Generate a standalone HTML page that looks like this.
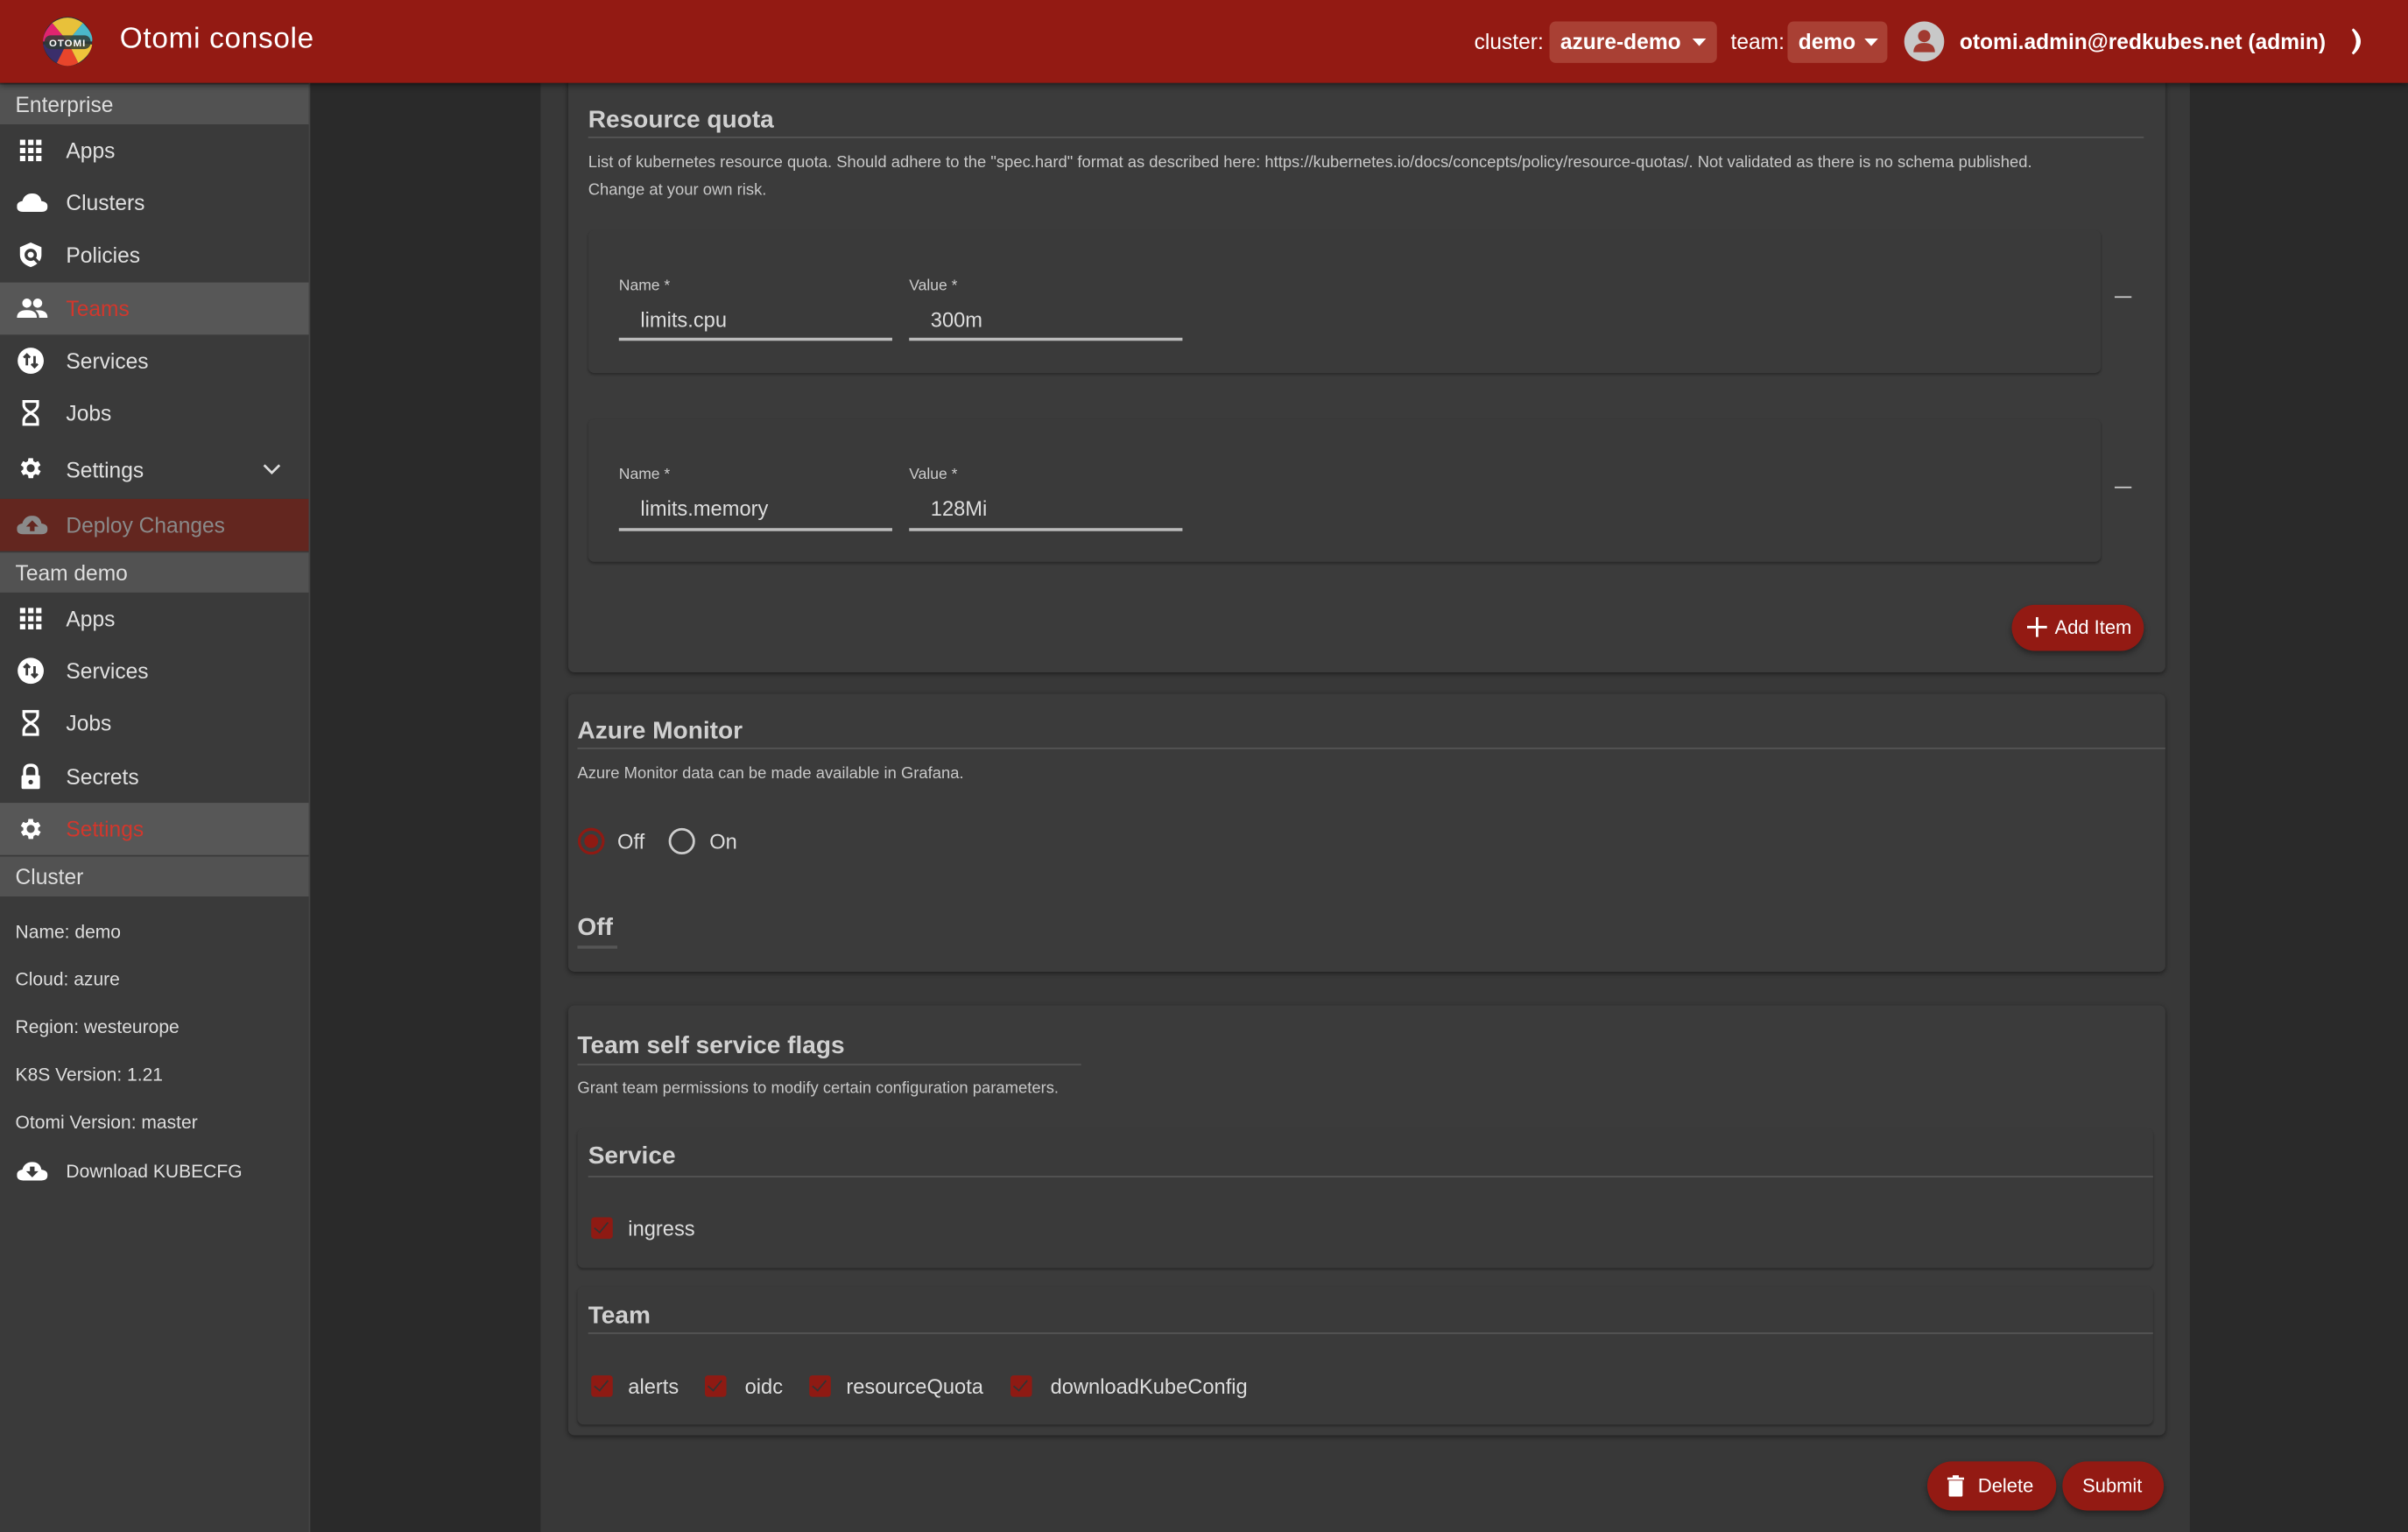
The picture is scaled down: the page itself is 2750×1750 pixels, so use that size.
<!DOCTYPE html>
<html><head><meta charset="utf-8">
<style>
html,body{margin:0;padding:0;width:2750px;height:1750px;overflow:hidden;background:#2a2a2a;}
#root{position:absolute;left:0;top:0;width:1568px;height:998px;transform:scale(1.7538,1.7535);transform-origin:0 0;font-family:"Liberation Sans",sans-serif;background:#2a2a2a;overflow:hidden;}
.a{position:absolute;}
.hdr{left:0;top:0;width:1568px;height:54px;background:#931a13;box-shadow:0 2px 4px rgba(0,0,0,.5);z-index:5;}
.side{left:0;top:54px;width:201px;height:944px;background:#3a3a3a;border-right:1px solid #444;}
.sh{position:absolute;left:0;width:201px;height:26px;background:#525252;color:#ddd;font-size:14px;line-height:26px;text-indent:10px;}
.it{position:absolute;left:0;width:201px;height:34px;color:#e0e0e0;font-size:14px;line-height:34px;}
.it span{position:absolute;left:43px;}
.it svg{position:absolute;left:11px;top:8px;}
.info{position:absolute;left:10px;color:#ddd;font-size:12px;}
.panel{left:352px;top:54px;width:1074px;height:944px;background:#383838;}
.card{position:absolute;background:#3b3b3b;border-radius:4px;box-shadow:0 1px 3px rgba(0,0,0,.45);}
.card.in{box-shadow:0 1px 1.5px rgba(0,0,0,.3);background:#3a3a3a;}
.ttl{position:absolute;color:#d0d0d0;font-size:16px;font-weight:bold;}
.ln{position:absolute;height:1px;background:#555;}
.desc{position:absolute;color:#c8c8c8;font-size:10.5px;line-height:18px;white-space:nowrap;}
.lab{position:absolute;color:#ccc;font-size:10px;}
.inp{position:absolute;color:#ddd;font-size:13.5px;}
.ul{position:absolute;height:1.5px;background:#bbb;}
.btn{position:absolute;background:#931a13;color:#fff;border-radius:16px;font-size:12.5px;box-shadow:0 2px 4px rgba(0,0,0,.4);}
.cb{position:absolute;width:14px;height:14px;background:#8e1a13;border-radius:2px;}
.cb:after{content:"";position:absolute;left:4px;top:1px;width:4px;height:8px;border:solid #333;border-width:0 1.5px 1.5px 0;transform:rotate(40deg);}
.cl{position:absolute;color:#ddd;font-size:13.5px;}
</style></head><body>
<div id="root">
<div class="a hdr">
  <svg class="a" style="left:27px;top:10px" width="34" height="34" viewBox="0 0 34 34">
    <circle cx="17" cy="17" r="16" fill="#2a2f3a"/>
    <path d="M7 5 Q17 -2 27 5 L17 17Z" fill="#e8c13a"/>
    <path d="M27 5 Q34 12 33 17 L17 17Z" fill="#4bb8c9"/>
    <path d="M7 5 Q1 11 1 17 L17 17Z" fill="#e0246f"/>
    <path d="M10 31 Q17 35 24 31 L17 17Z" fill="#e8452b"/>
    <path d="M24 31 Q32 26 33 19 L17 17Z" fill="#f0c53a"/>
    <path d="M1 19 Q3 27 10 31 L17 17Z" fill="#3b2e6b"/>
    <rect x="2" y="13" width="30" height="9" rx="4" fill="#2f3b36" opacity=".85"/>
    <text x="17" y="20.3" text-anchor="middle" fill="#fff" font-size="6.5" font-weight="bold" font-family="Liberation Sans" letter-spacing=".6">OTOMI</text>
  </svg>
  <div class="a" style="left:78px;top:15px;color:#fff;font-size:19px;letter-spacing:.4px">Otomi console</div>
  <div class="a" style="left:960px;top:19px;color:#fff;font-size:14px">cluster:</div>
  <div class="a" style="left:1009px;top:14px;width:109px;height:27px;background:#a94034;border-radius:4px"></div>
  <div class="a" style="left:1016px;top:19px;color:#fff;font-size:14px;font-weight:bold">azure-demo</div>
  <svg class="a" style="left:1102px;top:25px" width="10" height="6"><path d="M0 0H9L4.5 5Z" fill="#fff"/></svg>
  <div class="a" style="left:1127px;top:19px;color:#fff;font-size:14px">team:</div>
  <div class="a" style="left:1164px;top:14px;width:65px;height:27px;background:#a94034;border-radius:4px"></div>
  <div class="a" style="left:1171px;top:19px;color:#fff;font-size:14px;font-weight:bold">demo</div>
  <svg class="a" style="left:1214px;top:25px" width="10" height="6"><path d="M0 0H9L4.5 5Z" fill="#fff"/></svg>
  <svg class="a" style="left:1239px;top:13px" width="28" height="28" viewBox="0 0 28 28"><circle cx="14" cy="14" r="13" fill="#c8c8c8"/><circle cx="14" cy="10.5" r="4" fill="#a13a30"/><path d="M7 21 Q7 15 14 15 Q21 15 21 21Z" fill="#a13a30"/></svg>
  <div class="a" style="left:1276px;top:19px;color:#fff;font-size:14px;font-weight:bold">otomi.admin@redkubes.net (admin)</div>
  <svg class="a" style="left:1528px;top:18px" width="14" height="18" viewBox="0 0 14 18"><path d="M4 1 Q13 9 4 17 Q10 9 4 1Z" fill="#fff" stroke="#fff" stroke-width="1.5"/></svg>
</div>

<div class="a side">
  <div class="sh" style="top:1px">Enterprise</div>
  <div class="it" style="top:27px"><svg width="18" height="18" viewBox="0 0 18 18" fill="#fff"><rect x="2" y="2" width="3.5" height="3.5"/><rect x="7.3" y="2" width="3.5" height="3.5"/><rect x="12.5" y="2" width="3.5" height="3.5"/><rect x="2" y="7.3" width="3.5" height="3.5"/><rect x="7.3" y="7.3" width="3.5" height="3.5"/><rect x="12.5" y="7.3" width="3.5" height="3.5"/><rect x="2" y="12.5" width="3.5" height="3.5"/><rect x="7.3" y="12.5" width="3.5" height="3.5"/><rect x="12.5" y="12.5" width="3.5" height="3.5"/></svg><span>Apps</span></div>
  <div class="it" style="top:61px"><svg width="20" height="18" viewBox="0 0 20 18" fill="#fff"><path d="M4 15 Q0 15 0 11.5 Q0 8.5 3.5 8 Q5 3 10 3 Q15 3 16 8 Q20 8.5 20 11.5 Q20 15 16 15Z"/></svg><span>Clusters</span></div>
  <div class="it" style="top:95px"><svg width="18" height="18" viewBox="0 0 18 18"><path d="M9 1 L16 4 V9 Q16 14.5 9 17 Q2 14.5 2 9 V4Z" fill="#fff"/><circle cx="9" cy="9" r="3" fill="none" stroke="#3a3a3a" stroke-width="2"/><path d="M11 11 L14 14" stroke="#3a3a3a" stroke-width="2"/></svg><span>Policies</span></div>
  <div class="it" style="top:130px;background:#575757"><svg width="20" height="18" viewBox="0 0 20 18" fill="#fff"><circle cx="6.5" cy="5.5" r="3"/><circle cx="13.5" cy="5.5" r="3"/><path d="M0 15 Q0 10 6.5 10 Q13 10 13 15Z"/><path d="M12 10.2 Q20 9.5 20 15 H14.5 Q14.5 12 12 10.2Z"/></svg><span style="color:#d2372c">Teams</span></div>
  <div class="it" style="top:164px"><svg width="18" height="18" viewBox="0 0 18 18"><circle cx="9" cy="9" r="8.5" fill="#fff"/><path d="M6.5 12 V5 M4.5 7 L6.5 5 L8.5 7 M11.5 6 V13 M9.5 11 L11.5 13 L13.5 11" stroke="#3a3a3a" stroke-width="1.6" fill="none"/></svg><span>Services</span></div>
  <div class="it" style="top:198px"><svg width="18" height="18" viewBox="0 0 18 18" fill="none" stroke="#fff" stroke-width="1.8"><path d="M4.5 1.5 H13.5 V4 Q13.5 6.5 9 9 Q4.5 11.5 4.5 14 V16.5 H13.5 V14 Q13.5 11.5 9 9 Q4.5 6.5 4.5 4Z"/></svg><span>Jobs</span></div>
  <div class="it" style="top:234px;height:37px"><svg width="18" height="18" viewBox="0 0 24 24" fill="#fff"><path d="M19.4 13a7.5 7.5 0 0 0 0-2l2.1-1.6-2-3.5-2.5 1a7.4 7.4 0 0 0-1.7-1L15 3.3h-4l-.4 2.6a7.4 7.4 0 0 0-1.7 1l-2.5-1-2 3.5L6.6 11a7.5 7.5 0 0 0 0 2l-2.1 1.6 2 3.5 2.5-1a7.4 7.4 0 0 0 1.7 1l.4 2.6h4l.4-2.6a7.4 7.4 0 0 0 1.7-1l2.5 1 2-3.5zM13 15.5a3.5 3.5 0 1 1 0-7 3.5 3.5 0 0 1 0 7z" transform="translate(-1 0)"/></svg><span style="line-height:37px">Settings</span><svg style="left:171px;top:14px" width="12" height="8" viewBox="0 0 12 8"><path d="M1 1 L6 6 L11 1" stroke="#ddd" stroke-width="1.6" fill="none"/></svg></div>
  <div class="it" style="top:271px;background:#63261f;color:#8a8a8a"><svg width="20" height="18" viewBox="0 0 20 18"><path d="M4 15 Q0 15 0 11.5 Q0 8.5 3.5 8 Q5 3 10 3 Q15 3 16 8 Q20 8.5 20 11.5 Q20 15 16 15Z" fill="#8a8a8a"/><path d="M10 6 L14 10 H11.5 V13 H8.5 V10 H6Z" fill="#63261f"/></svg><span>Deploy Changes</span></div>
  <div class="sh" style="top:306px">Team demo</div>
  <div class="it" style="top:332px"><svg width="18" height="18" viewBox="0 0 18 18" fill="#fff"><rect x="2" y="2" width="3.5" height="3.5"/><rect x="7.3" y="2" width="3.5" height="3.5"/><rect x="12.5" y="2" width="3.5" height="3.5"/><rect x="2" y="7.3" width="3.5" height="3.5"/><rect x="7.3" y="7.3" width="3.5" height="3.5"/><rect x="12.5" y="7.3" width="3.5" height="3.5"/><rect x="2" y="12.5" width="3.5" height="3.5"/><rect x="7.3" y="12.5" width="3.5" height="3.5"/><rect x="12.5" y="12.5" width="3.5" height="3.5"/></svg><span>Apps</span></div>
  <div class="it" style="top:366px"><svg width="18" height="18" viewBox="0 0 18 18"><circle cx="9" cy="9" r="8.5" fill="#fff"/><path d="M6.5 12 V5 M4.5 7 L6.5 5 L8.5 7 M11.5 6 V13 M9.5 11 L11.5 13 L13.5 11" stroke="#3a3a3a" stroke-width="1.6" fill="none"/></svg><span>Services</span></div>
  <div class="it" style="top:400px"><svg width="18" height="18" viewBox="0 0 18 18" fill="none" stroke="#fff" stroke-width="1.8"><path d="M4.5 1.5 H13.5 V4 Q13.5 6.5 9 9 Q4.5 11.5 4.5 14 V16.5 H13.5 V14 Q13.5 11.5 9 9 Q4.5 6.5 4.5 4Z"/></svg><span>Jobs</span></div>
  <div class="it" style="top:435px"><svg width="18" height="18" viewBox="0 0 18 18"><path d="M5 8 V5.5 Q5 1.5 9 1.5 Q13 1.5 13 5.5 V8" stroke="#fff" stroke-width="2" fill="none"/><rect x="3" y="8" width="12" height="9" rx="1" fill="#fff"/><circle cx="9" cy="12.5" r="1.5" fill="#3a3a3a"/></svg><span>Secrets</span></div>
  <div class="it" style="top:469px;background:#575757"><svg width="18" height="18" viewBox="0 0 24 24" fill="#fff"><path d="M19.4 13a7.5 7.5 0 0 0 0-2l2.1-1.6-2-3.5-2.5 1a7.4 7.4 0 0 0-1.7-1L15 3.3h-4l-.4 2.6a7.4 7.4 0 0 0-1.7 1l-2.5-1-2 3.5L6.6 11a7.5 7.5 0 0 0 0 2l-2.1 1.6 2 3.5 2.5-1a7.4 7.4 0 0 0 1.7 1l.4 2.6h4l.4-2.6a7.4 7.4 0 0 0 1.7-1l2.5 1 2-3.5zM13 15.5a3.5 3.5 0 1 1 0-7 3.5 3.5 0 0 1 0 7z" transform="translate(-1 0)"/></svg><span style="color:#d2372c">Settings</span></div>
  <div class="sh" style="top:504px">Cluster</div>
  <div class="info" style="top:546px">Name: demo</div>
  <div class="info" style="top:577px">Cloud: azure</div>
  <div class="info" style="top:608px">Region: westeurope</div>
  <div class="info" style="top:639px">K8S Version: 1.21</div>
  <div class="info" style="top:670px">Otomi Version: master</div>
  <div class="it" style="top:692px;font-size:12px"><svg width="20" height="18" viewBox="0 0 20 18"><path d="M4 15 Q0 15 0 11.5 Q0 8.5 3.5 8 Q5 3 10 3 Q15 3 16 8 Q20 8.5 20 11.5 Q20 15 16 15Z" fill="#fff"/><path d="M10 13 L14 9 H11.5 V6 H8.5 V9 H6Z" fill="#3a3a3a"/></svg><span>Download KUBECFG</span></div>
</div>

<div class="a panel"></div>

<!-- Resource quota card -->
<div class="card" style="left:370px;top:40px;width:1040px;height:398px"></div>
<div class="ttl" style="left:383px;top:70px">Resource quota</div>
<div class="ln" style="left:383px;top:89px;width:1013px"></div>
<div class="desc" style="left:383px;top:97px">List of kubernetes resource quota. Should adhere to the "spec.hard" format as described here: https://kubernetes.io/docs/concepts/policy/resource-quotas/. Not validated as there is no schema published.<br>Change at your own risk.</div>
<div class="card in" style="left:383px;top:150px;width:985px;height:93px"></div>
<div class="lab" style="left:403px;top:181px">Name *</div>
<div class="lab" style="left:592px;top:181px">Value *</div>
<div class="inp" style="left:417px;top:201px">limits.cpu</div>
<div class="inp" style="left:606px;top:201px">300m</div>
<div class="ul" style="left:403px;top:220px;width:178px"></div>
<div class="ul" style="left:592px;top:220px;width:178px"></div>
<div class="a" style="left:1377px;top:193px;width:11px;height:1px;background:#ccc"></div>
<div class="card in" style="left:383px;top:273px;width:985px;height:93px"></div>
<div class="lab" style="left:403px;top:304px">Name *</div>
<div class="lab" style="left:592px;top:304px">Value *</div>
<div class="inp" style="left:417px;top:324px">limits.memory</div>
<div class="inp" style="left:606px;top:324px">128Mi</div>
<div class="ul" style="left:403px;top:344px;width:178px"></div>
<div class="ul" style="left:592px;top:344px;width:178px"></div>
<div class="a" style="left:1377px;top:317px;width:11px;height:1px;background:#ccc"></div>
<div class="btn" style="left:1310px;top:394px;width:86px;height:30px">
  <svg class="a" style="left:10px;top:8px" width="13" height="13"><path d="M6.5 0V13M0 6.5H13" stroke="#fff" stroke-width="1.6"/></svg>
  <span class="a" style="left:28px;top:8px">Add Item</span>
</div>

<!-- Azure monitor -->
<div class="card" style="left:370px;top:452px;width:1040px;height:181px"></div>
<div class="ttl" style="left:376px;top:468px">Azure Monitor</div>
<div class="ln" style="left:376px;top:487px;width:1034px"></div>
<div class="desc" style="left:376px;top:495px">Azure Monitor data can be made available in Grafana.</div>
<svg class="a" style="left:376px;top:539px" width="18" height="18"><circle cx="9" cy="9" r="7.8" fill="none" stroke="#8e1a13" stroke-width="1.8"/><circle cx="9" cy="9" r="4.5" fill="#8e1a13"/></svg>
<div class="cl" style="left:402px;top:541px">Off</div>
<svg class="a" style="left:435px;top:539px" width="18" height="18"><circle cx="9" cy="9" r="7.8" fill="none" stroke="#ccc" stroke-width="1.6"/></svg>
<div class="cl" style="left:462px;top:541px">On</div>
<div class="ttl" style="left:376px;top:596px">Off</div>
<div class="ln" style="left:376px;top:616px;width:26px;height:1.5px"></div>

<!-- Team self service -->
<div class="card" style="left:370px;top:655px;width:1040px;height:280px"></div>
<div class="ttl" style="left:376px;top:673px">Team self service flags</div>
<div class="ln" style="left:376px;top:693px;width:328px"></div>
<div class="desc" style="left:376px;top:700px">Grant team permissions to modify certain configuration parameters.</div>
<div class="card in" style="left:376px;top:735px;width:1026px;height:91px"></div>
<div class="ttl" style="left:383px;top:745px">Service</div>
<div class="ln" style="left:383px;top:766px;width:1019px"></div>
<div class="cb" style="left:385px;top:793px"></div><div class="cl" style="left:409px;top:793px">ingress</div>
<div class="card in" style="left:376px;top:838px;width:1026px;height:90px"></div>
<div class="ttl" style="left:383px;top:849px">Team</div>
<div class="ln" style="left:383px;top:868px;width:1019px"></div>
<div class="cb" style="left:385px;top:896px"></div><div class="cl" style="left:409px;top:896px">alerts</div>
<div class="cb" style="left:459px;top:896px"></div><div class="cl" style="left:485px;top:896px">oidc</div>
<div class="cb" style="left:527px;top:896px"></div><div class="cl" style="left:551px;top:896px">resourceQuota</div>
<div class="cb" style="left:658px;top:896px"></div><div class="cl" style="left:684px;top:896px">downloadKubeConfig</div>

<div class="btn" style="left:1255px;top:952px;width:84px;height:32px">
  <svg class="a" style="left:13px;top:9px" width="11" height="14" viewBox="0 0 11 14"><path d="M0 1.5H11V3H0Z M3.5 0H7.5V1.5H3.5Z M1 3.5H10V13Q10 14 9 14H2Q1 14 1 13Z" fill="#fff"/></svg>
  <span class="a" style="left:33px;top:9px">Delete</span>
</div>
<div class="btn" style="left:1343px;top:952px;width:66px;height:32px"><span class="a" style="left:13px;top:9px">Submit</span></div>
</div>
</body></html>
